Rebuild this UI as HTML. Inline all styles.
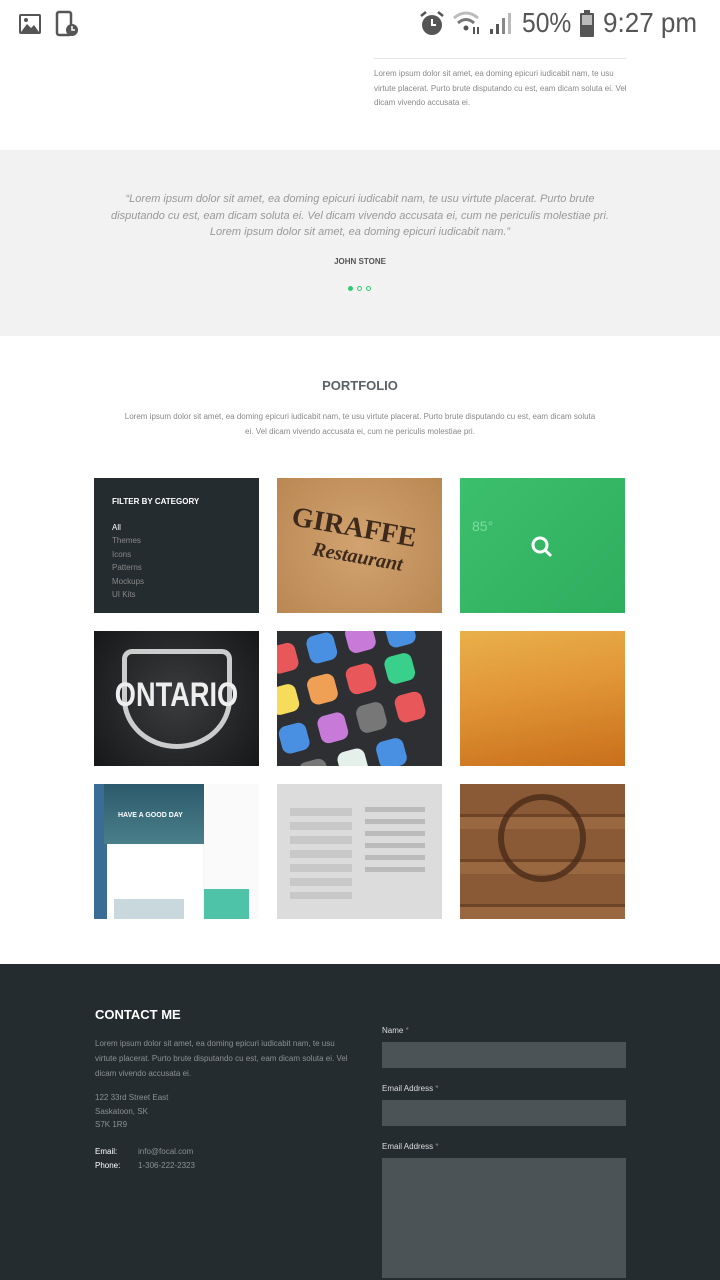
<!DOCTYPE html>
<html><head><meta charset="utf-8"><style>
*{margin:0;padding:0;box-sizing:border-box}
body{width:720px;height:1280px;overflow:hidden;background:#fff;font-family:"Liberation Sans",sans-serif;position:relative}
.a{position:absolute}
.t{position:absolute;width:165px;height:135px;overflow:hidden}
.sm{font-size:8px;color:#888;line-height:15.5px}
</style></head><body>
<!-- status bar -->
<svg class="a" style="left:18px;top:12px" width="24" height="24" viewBox="0 0 24 24"><rect x="1" y="2" width="22" height="20" rx="2" fill="#555"/><rect x="3" y="4" width="18" height="16" fill="#fff"/><path d="M3 20 L9 12 L13 16 L16 13 L21 20Z" fill="#555"/><circle cx="8" cy="8" r="2" fill="#555"/></svg>
<svg class="a" style="left:55px;top:10px" width="26" height="28" viewBox="0 0 26 28"><rect x="2" y="2" width="14" height="23" rx="2" fill="none" stroke="#555" stroke-width="2.5"/><circle cx="17" cy="20" r="6" fill="#555"/><path d="M17 16v4h3" stroke="#fff" stroke-width="1.5" fill="none"/></svg>
<svg class="a" style="left:418px;top:10px" width="28" height="28" viewBox="0 0 28 28"><circle cx="14" cy="15" r="10" fill="#555"/><path d="M14 9v6h4" stroke="#fff" stroke-width="2" fill="none"/><path d="M3 6l5-4M25 6l-5-4" stroke="#555" stroke-width="2.5"/></svg>
<svg class="a" style="left:452px;top:10px" width="62" height="26" viewBox="0 0 62 26"><path d="M2 8 Q14 -2 26 8" stroke="#bbb" stroke-width="3" fill="none"/><path d="M6 13 Q14 6 22 13" stroke="#777" stroke-width="3" fill="none"/><circle cx="14" cy="18" r="2.5" fill="#555"/><path d="M22 24v-7M26 17v7" stroke="#555" stroke-width="2"/><rect x="38" y="19" width="3" height="5" fill="#555"/><rect x="44" y="14" width="3" height="10" fill="#555"/><rect x="50" y="8" width="3" height="16" fill="#888"/><rect x="56" y="3" width="3" height="21" fill="#bbb"/></svg>
<div class="a" style="left:522px;top:7px;font-size:28px;color:#555;transform:scaleX(.88);transform-origin:left">50%</div>
<svg class="a" style="left:578px;top:10px" width="18" height="28" viewBox="0 0 18 28"><rect x="6" y="0" width="6" height="3" fill="#555"/><rect x="2" y="3" width="14" height="24" rx="1" fill="#555"/><rect x="4" y="5" width="10" height="10" fill="#bbb"/></svg>
<div class="a" style="left:603px;top:7px;font-size:28px;color:#555;transform:scaleX(.93);transform-origin:left">9:27 pm</div>

<div class="a" style="left:374px;top:58px;width:252px;height:1px;background:#e6e6e6"></div>
<div class="a sm" style="left:374px;top:67px;width:256px;line-height:14.5px">Lorem ipsum dolor sit amet, ea doming epicuri iudicabit nam, te usu virtute placerat. Purto brute disputando cu est, eam dicam soluta ei. Vel dicam vivendo accusata ei.</div>

<div class="a" style="left:0;top:150px;width:720px;height:186px;background:#f2f2f2"></div>
<div class="a" style="left:110px;top:191px;width:500px;text-align:center;font-size:11px;font-style:italic;color:#999;line-height:16.5px">“Lorem ipsum dolor sit amet, ea doming epicuri iudicabit nam, te usu virtute placerat. Purto brute disputando cu est, eam dicam soluta ei. Vel dicam vivendo accusata ei, cum ne periculis molestiae pri. Lorem ipsum dolor sit amet, ea doming epicuri iudicabit nam.”</div>
<div class="a" style="left:0;top:257px;width:720px;text-align:center;font-size:8px;font-weight:bold;color:#555">JOHN STONE</div>
<div class="a" style="left:348px;top:286px;width:5px;height:5px;border-radius:50%;background:#2ecc71"></div>
<div class="a" style="left:357px;top:286px;width:5px;height:5px;border-radius:50%;border:1px solid #2ecc71"></div>
<div class="a" style="left:366px;top:286px;width:5px;height:5px;border-radius:50%;border:1px solid #2ecc71"></div>

<div class="a" style="left:0;top:378px;width:720px;text-align:center;font-size:13px;font-weight:bold;color:#5a6168">PORTFOLIO</div>
<div class="a sm" style="left:120px;top:409px;width:480px;text-align:center;line-height:15px">Lorem ipsum dolor sit amet, ea doming epicuri iudicabit nam, te usu virtute placerat. Purto brute disputando cu est, eam dicam soluta ei. Vel dicam vivendo accusata ei, cum ne periculis molestiae pri.</div>

<div class="t" style="left:94px;top:478px;background:#252c30;color:#888;font-size:8px;padding:17px 18px;line-height:13.5px">
<div style="color:#fff;font-weight:bold;margin-bottom:12px">FILTER BY CATEGORY</div>
<div style="color:#fff">All</div><div>Themes</div><div>Icons</div><div>Patterns</div><div>Mockups</div><div>UI Kits</div></div>
<div class="t" style="left:277px;top:478px;background:radial-gradient(circle at 50% 50%,#d2a370,#b98752)"><div style="position:absolute;left:14px;top:34px;font:bold 28px 'Liberation Serif',serif;color:#3d2a1c;transform:rotate(10deg)">GIRAFFE</div><div style="position:absolute;left:35px;top:68px;font:italic bold 20px 'Liberation Serif',serif;color:#3d2a1c;transform:rotate(10deg)">Restaurant</div></div>
<div class="t" style="left:460px;top:478px;background:linear-gradient(135deg,#3cbf6c,#2fae5e)"><div style="position:absolute;left:12px;top:40px;font-size:14px;color:#7fdc9f">85°</div><svg style="position:absolute;left:70px;top:57px" width="24" height="24"><circle cx="10" cy="10" r="7" fill="none" stroke="#fff" stroke-width="3"/><path d="M15 15l6 6" stroke="#fff" stroke-width="3"/></svg></div>

<div class="t" style="left:94px;top:631px;background:radial-gradient(circle at 50% 50%,#3a3c3e,#151718)"><div style="position:absolute;left:28px;top:18px;width:110px;height:100px;border:5px solid #ccc;border-radius:10px 10px 50% 50%"></div><div style="position:absolute;left:0;width:165px;top:45px;text-align:center;font:bold 34px 'Liberation Sans Narrow','Liberation Sans',sans-serif;color:#eee;transform:scaleX(.8)">ONTARIO</div></div>
<div class="t" style="left:277px;top:631px;background:#2e2f33">
<svg width="165" height="135"><g transform="rotate(-15 82 67)"><rect x="5" y="-5" width="28" height="28" rx="8" fill="#e8585a"/><rect x="45" y="-5" width="28" height="28" rx="8" fill="#4a90e2"/><rect x="85" y="-5" width="28" height="28" rx="8" fill="#c77ad8"/><rect x="125" y="0" width="28" height="28" rx="8" fill="#4a90e2"/><rect x="-5" y="35" width="28" height="28" rx="8" fill="#f6dc5b"/><rect x="35" y="35" width="28" height="28" rx="8" fill="#f0a055"/><rect x="75" y="35" width="28" height="28" rx="8" fill="#e8585a"/><rect x="115" y="35" width="28" height="28" rx="8" fill="#38d08a"/><rect x="-5" y="75" width="28" height="28" rx="8" fill="#4a90e2"/><rect x="35" y="75" width="28" height="28" rx="8" fill="#c77ad8"/><rect x="75" y="75" width="28" height="28" rx="8" fill="#777"/><rect x="115" y="75" width="28" height="28" rx="8" fill="#e8585a"/><rect x="5" y="115" width="28" height="28" rx="8" fill="#777"/><rect x="45" y="115" width="28" height="28" rx="8" fill="#e6f0ea"/><rect x="85" y="115" width="28" height="28" rx="8" fill="#4a90e2"/></g></svg></div>
<div class="t" style="left:460px;top:631px;background:linear-gradient(170deg,#e9b04a 0%,#e19536 45%,#c86f1c 100%)"></div>

<div class="t" style="left:94px;top:784px;background:linear-gradient(90deg,#3a6d95 0 8%,#fff 8% 66%,#f5f5f5 66%)"><div style="position:absolute;left:10px;top:0;width:100px;height:60px;background:linear-gradient(#2c5a6c,#4a7f8a)"></div><div style="position:absolute;left:24px;top:28px;font-size:7px;font-weight:bold;color:#fff">HAVE A GOOD DAY</div><div style="position:absolute;left:110px;top:0;width:55px;height:135px;background:#fafafa"></div><div style="position:absolute;left:110px;top:105px;width:45px;height:30px;background:#4fc3a8"></div><div style="position:absolute;left:20px;top:115px;width:70px;height:20px;background:#c8d8dc"></div></div>
<div class="t" style="left:277px;top:784px;background:#dcdcdc"><div style="position:absolute;left:13px;top:20px;width:62px;height:95px;background:repeating-linear-gradient(#dcdcdc 0 4px,#c8c8c8 4px 12px,#dcdcdc 12px 14px)"></div><div style="position:absolute;left:88px;top:20px;width:60px;height:70px;background:repeating-linear-gradient(#dcdcdc 0 3px,#bbb 3px 8px,#dcdcdc 8px 12px)"></div></div>
<div class="t" style="left:460px;top:784px;background:repeating-linear-gradient(#8a5a36 0 30px,#6e4426 30px 33px,#9a6840 33px 45px);"><div style="position:absolute;left:38px;top:10px;width:88px;height:88px;border-radius:50%;border:6px solid #4a2a18;opacity:.8"></div></div>

<div class="a" style="left:0;top:964px;width:720px;height:316px;background:#252c30"></div>
<div class="a" style="left:95px;top:1007px;font-size:13px;font-weight:bold;color:#fff">CONTACT ME</div>
<div class="a sm" style="left:95px;top:1036px;width:260px;color:#8a9094;line-height:15px">Lorem ipsum dolor sit amet, ea doming epicuri iudicabit nam, te usu virtute placerat. Purto brute disputando cu est, eam dicam soluta ei. Vel dicam vivendo accusata ei.</div>
<div class="a sm" style="left:95px;top:1091px;color:#8a9094;line-height:13.5px">122 33rd Street East<br>Saskatoon, SK<br>S7K 1R9</div>
<div class="a sm" style="left:95px;top:1145px;color:#fff;line-height:13.5px">Email:<br>Phone:</div>
<div class="a sm" style="left:138px;top:1145px;color:#8a9094;line-height:13.5px">info@focal.com<br>1-306-222-2323</div>
<div class="a" style="left:382px;top:1026px;font-size:8px;color:#ddd">Name <span style="color:#888">*</span></div>
<div class="a" style="left:382px;top:1042px;width:244px;height:26px;background:#4b5357"></div>
<div class="a" style="left:382px;top:1084px;font-size:8px;color:#ddd">Email Address <span style="color:#888">*</span></div>
<div class="a" style="left:382px;top:1100px;width:244px;height:26px;background:#4b5357"></div>
<div class="a" style="left:382px;top:1142px;font-size:8px;color:#ddd">Email Address <span style="color:#888">*</span></div>
<div class="a" style="left:382px;top:1158px;width:244px;height:120px;background:#4b5357"></div>
</body></html>
